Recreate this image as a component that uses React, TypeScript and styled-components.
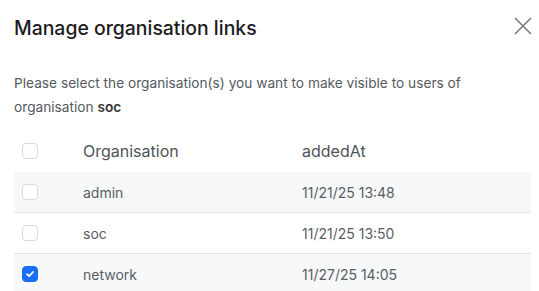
import React, { useState } from "react";
import styled, { createGlobalStyle } from "styled-components";

const Global = createGlobalStyle`
  html, body { margin: 0; padding: 0; background: #fff; }
  body { font-family: Inter, "Noto Sans", sans-serif; -webkit-font-smoothing: antialiased; }
  * { box-sizing: border-box; }
`;

const Dialog = styled.div`
  width: 539px;
  height: 291px;
  overflow: hidden;
  padding: 0 8px 0 14px;
  background: #fff;
`;

const Header = styled.div`
  display: flex;
  align-items: center;
  justify-content: space-between;
  height: 56px;
`;

const Title = styled.h2`
  margin: 0;
  font-size: 19.4px;
  font-weight: 500;
  color: #1c1c1e;
`;

const CloseButton = styled.button`
  border: 0;
  background: none;
  padding: 0;
  width: 18px;
  height: 18px;
  display: flex;
  align-items: center;
  justify-content: center;
  color: #7a7a7a;
  cursor: pointer;
  margin-right: -1px;
  margin-top: -5px;
`;

const Description = styled.p`
  margin: 16px 0 0;
  font-size: 13.7px;
  line-height: 23.5px;
  color: #555a60;
  & b { color: #333; font-weight: 600; }
`;

const Table = styled.div`
  margin-top: 12px;
  width: 517px;
`;

const Row = styled.div<{ $shade?: boolean; $head?: boolean }>`
  display: grid;
  grid-template-columns: 69px 219px 1fr;
  align-items: center;
  height: 41px;
  background: ${(p) => (p.$shade ? "#f7f8fa" : "#fff")};
  border-bottom: 1px solid ${(p) => (p.$head ? "transparent" : "#e2e4e8")};
`;

const Cell = styled.div<{ $head?: boolean }>`
  font-size: ${(p) => (p.$head ? "16px" : "14px")};
  color: ${(p) => (p.$head ? "#4f5359" : "#5a5e64")};
`;

const CheckCell = styled.div`
  padding-left: 8px;
  display: flex;
  align-items: center;
`;

const Box = styled.span<{ $on?: boolean }>`
  width: 16px;
  height: 16px;
  border-radius: 4px;
  border: 1px solid ${(p) => (p.$on ? "#1a6ef5" : "#d9dbe0")};
  background: ${(p) => (p.$on ? "#1a6ef5" : "#fff")};
  display: flex;
  align-items: center;
  justify-content: center;
`;

const Check = ({ on }: { on?: boolean }) => (
  <Box $on={on}>
    {on && (
      <svg width="10" height="10" viewBox="0 0 10 10">
        <path d="M2 5.2 L4.1 7.2 L8 3" fill="none" stroke="#fff" strokeWidth="1.8" strokeLinecap="round" strokeLinejoin="round" />
      </svg>
    )}
  </Box>
);

const rows = [
  { name: "admin", at: "11/21/25 13:48", on: false },
  { name: "soc", at: "11/21/25 13:50", on: false },
  { name: "network", at: "11/27/25 14:05", on: true },
];

export default function App() {
  const [data] = useState(rows);
  return (
    <>
      <Global />
      <Dialog>
        <Header>
          <Title>Manage organisation links</Title>
          <CloseButton aria-label="close">
            <svg width="18" height="18" viewBox="0 0 18 18">
              <path d="M1 1 L17 17 M17 1 L1 17" stroke="currentColor" strokeWidth="1.6" />
            </svg>
          </CloseButton>
        </Header>
        <Description>
          Please select the organisation(s) you want to make visible to users of organisation <b>soc</b>
        </Description>
        <Table>
          <Row $head>
            <CheckCell><Check /></CheckCell>
            <Cell $head>Organisation</Cell>
            <Cell $head>addedAt</Cell>
          </Row>
          {data.map((r, i) => (
            <Row key={r.name} $shade={i % 2 === 0}>
              <CheckCell><Check on={r.on} /></CheckCell>
              <Cell>{r.name}</Cell>
              <Cell>{r.at}</Cell>
            </Row>
          ))}
        </Table>
      </Dialog>
    </>
  );
}
